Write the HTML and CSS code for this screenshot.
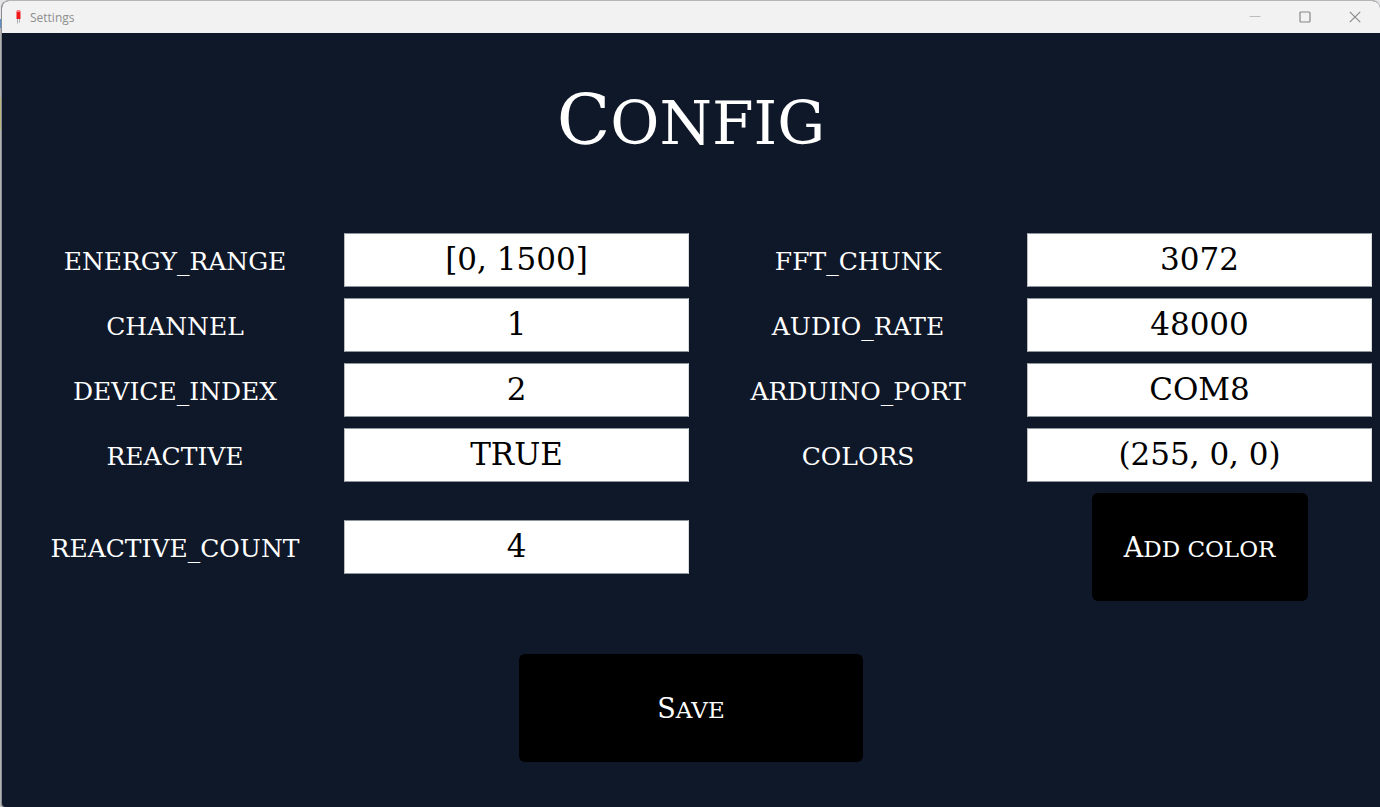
FILE: index.html
```html
<!DOCTYPE html>
<html lang="en">
<head>
<meta charset="utf-8">
<title>Settings</title>
<link rel="stylesheet" href="styles.css">
</head>
<body>
<div class="window">
  <header class="titlebar">
    <svg class="app-icon" width="6" height="16" viewBox="0 0 6 16" aria-hidden="true">
      <path d="M2.5 10v4.5M4.5 10v3.5" stroke="#9a9a9a" stroke-width="0.8" fill="none"/>
      <path d="M1.5 3q0-2 2-2t2 2v7h-4z" fill="#f01818"/>
      <path d="M1.5 3q0-2 2-2t2 2z" fill="#f88080"/>
    </svg>
    <span class="titlebar-text">Settings</span>
    <div class="window-controls">
      <button type="button" class="control" aria-label="Minimize"><svg width="12" height="12" viewBox="0 0 12 12"><path d="M0.5 5.5h11" stroke="#bcbcbc"/></svg></button>
      <button type="button" class="control" aria-label="Maximize"><svg width="12" height="12" viewBox="0 0 12 12"><rect x="1" y="1" width="10" height="10" rx="1" fill="none" stroke="#858585" stroke-width="1.2"/></svg></button>
      <button type="button" class="control" aria-label="Close"><svg width="12" height="12" viewBox="0 0 12 12"><path d="M0.8 0.8l10.4 10.4M11.2 0.8L0.8 11.2" stroke="#858585" stroke-width="1.1"/></svg></button>
    </div>
  </header>
  <main class="content">
    <h1 class="title caps">Config</h1>
    <form class="form">
      <div class="fields">
        <label for="energy">ENERGY_RANGE</label><input id="energy" type="text" value="[0, 1500]">
        <label for="fft">FFT_CHUNK</label><input id="fft" type="text" value="3072">
        <label for="channel">CHANNEL</label><input id="channel" type="text" value="1">
        <label for="rate">AUDIO_RATE</label><input id="rate" type="text" value="48000">
        <label for="device">DEVICE_INDEX</label><input id="device" type="text" value="2">
        <label for="port">ARDUINO_PORT</label><input id="port" type="text" value="COM8">
        <label for="reactive">REACTIVE</label><input id="reactive" type="text" value="TRUE">
        <label for="colors">COLORS</label><input id="colors" type="text" value="(255, 0, 0)">
        <label for="count">REACTIVE_COUNT</label><input id="count" type="text" value="4">
        <button type="button" class="button add"><span class="caps">Add color</span></button>
      </div>
      <button type="submit" class="button save"><span class="caps">Save</span></button>
    </form>
  </main>
</div>
</body>
</html>
```
FILE: styles.css
```css
* {
  box-sizing: border-box;
}

body {
  margin: 0;
  background: linear-gradient(#e4e4e4 19px, #5b8fc9 19px 28px, #b4b4b4 28px 97px, #b9b77c 97px 130px, #b4b4b4 130px);
}

.window {
  display: flex;
  flex-direction: column;
  min-height: 100vh;
  margin-left: 1px;
  border-top: 1px solid #b5b5b5;
  border-left: 1px solid #8a8d92;
  border-radius: 8px 8px 0 4px;
  overflow: hidden;
  background: #0f1828;
  color: #fff;
  font-family: "Copperplate Gothic Light", "DejaVu Serif", serif;
}

.titlebar {
  display: flex;
  align-items: center;
  height: 32px;
  padding-left: 13px;
  background: #f2f2f2;
  color: #8e8e8e;
}

.titlebar-text {
  margin-left: 9px;
  font: 12px "Open Sans", "Noto Sans", sans-serif;
}

.window-controls {
  display: flex;
  margin-left: auto;
}

.control {
  display: grid;
  place-items: center;
  width: 50px;
  height: 32px;
  padding: 0;
  border: 0;
  background: none;
}

.content {
  padding-bottom: 44px;
}

.title {
  margin: 0;
  padding: 37px 0 60px;
  font-size: 60px;
  font-weight: 400;
  line-height: 100px;
  text-align: center;
}

.title::first-letter {
  font-size: 70px;
}

.caps {
  text-transform: uppercase;
}

.form {
  display: flex;
  flex-direction: column;
  align-items: center;
  gap: 53px;
}

.fields {
  display: grid;
  grid-template-columns: 49fr 50fr 49fr 50fr;
  row-gap: 11px;
  align-items: center;
  width: 100%;
  padding: 0 8px 0 4px;
}

.fields label {
  padding-top: 3px;
  font-size: 25px;
  line-height: 32px;
  text-align: center;
}

.fields input {
  width: 100%;
  min-width: 0;
  height: 54px;
  padding: 0 0 2px;
  border: 1px solid #8f969b;
  border-color: #8f969b #d8dcde #8f969b #b9bdc0;
  background: #fff;
  color: #000;
  font: 31px "Copperplate Gothic Light", "DejaVu Serif", serif;
  text-align: center;
}

.button {
  height: 108px;
  padding: 0;
  border: 0;
  border-radius: 6px;
  background: #000;
  color: #fff;
  font: 23px "Copperplate Gothic Light", "DejaVu Serif", serif;
}

.button .caps {
  display: inline-block;
}

.button .caps::first-letter {
  font-size: 27px;
}

.add {
  grid-column: 4;
  justify-self: center;
  width: 216px;
}

.save {
  width: 25%;
  min-width: 216px;
}
```
